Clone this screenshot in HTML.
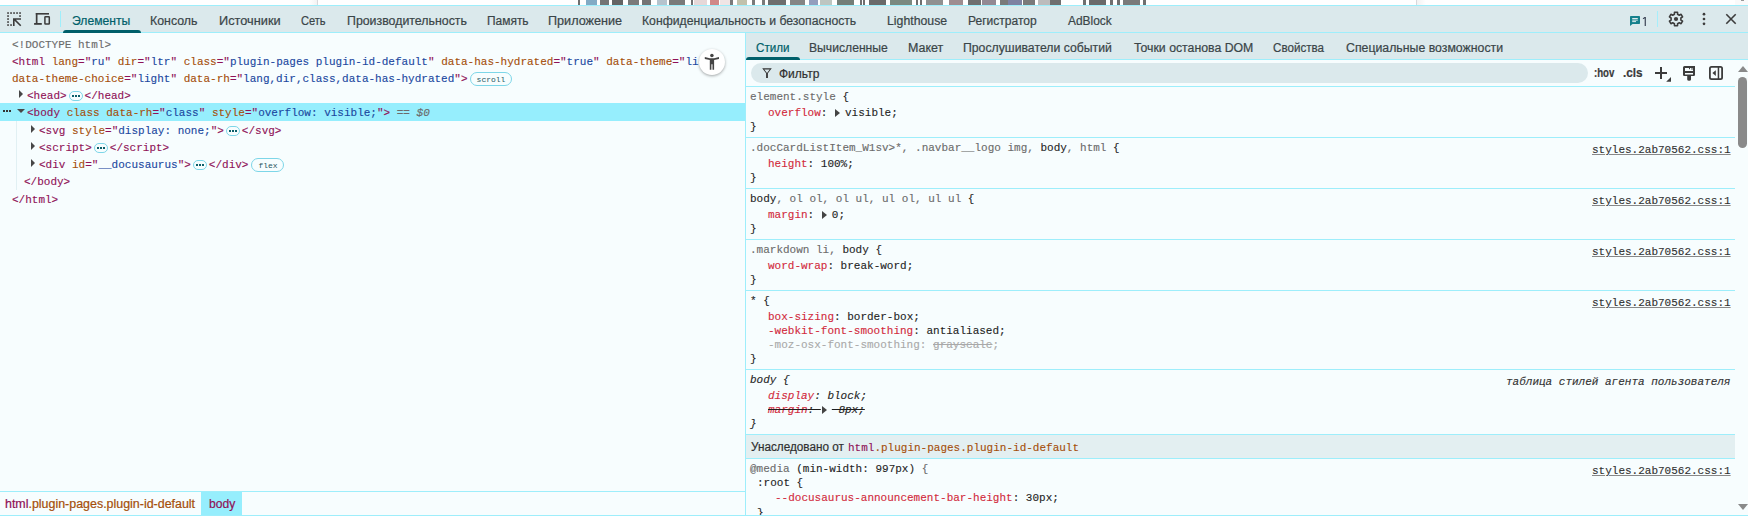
<!DOCTYPE html>
<html><head><meta charset="utf-8"><style>
html,body{margin:0;padding:0;width:1748px;height:516px;overflow:hidden;background:#fff;position:relative}
.r{position:absolute}
svg.r{position:absolute;display:block}
.m{position:absolute;font-family:"Liberation Mono",monospace;font-size:11px;line-height:15px;white-space:pre;color:#1f1f1f;-webkit-text-stroke:0.12px currentColor}
.s{position:absolute;font-family:"Liberation Sans",sans-serif;font-size:12px;line-height:15px;white-space:pre;color:#3a4548;-webkit-text-stroke:0.2px currentColor}
.tg{color:#8f1157} .at{color:#a54e0a} .vl{color:#1a47a0} .gy{color:#6b6b6b}
.pr{color:#d22a3c} .k{color:#1f1f1f}
.dots{display:inline-block;position:relative;width:14px;height:10px;box-sizing:border-box;border:1px solid #7dd6e8;border-radius:5px;margin:0 2px 0 2px;vertical-align:-2px}
.dots:after{content:"";position:absolute;left:2px;top:3px;width:2px;height:2px;background:#0b5f6a;box-shadow:3px 0 #0b5f6a,6px 0 #0b5f6a}
.badge{position:absolute;box-sizing:border-box;border:1px solid #7dd6e8;border-radius:7px;font-family:"Liberation Mono",monospace;font-size:8px;text-align:center;color:#1f5560}
.arr{display:inline-block;width:0;height:0;border-left:5px solid #444;border-top:4px solid transparent;border-bottom:4px solid transparent;margin:0 5px 0 1px;vertical-align:-1px}
.lnk{color:#303030;text-decoration:underline;text-decoration-color:#888}
</style></head><body>
<div class="r" style="left:0px;top:0px;width:1748px;height:5px;background:#ffffff;"></div>
<div class="r" style="left:578px;top:0px;width:2px;height:5px;background:#6f6f6f;"></div>
<div class="r" style="left:586px;top:0px;width:11px;height:5px;background:#82abc5;"></div>
<div class="r" style="left:600px;top:0px;width:9px;height:5px;background:#747474;"></div>
<div class="r" style="left:612px;top:0px;width:11px;height:5px;background:#646464;"></div>
<div class="r" style="left:628px;top:0px;width:11px;height:5px;background:#7a7a7a;"></div>
<div class="r" style="left:642px;top:0px;width:9px;height:5px;background:#747474;"></div>
<div class="r" style="left:657px;top:0px;width:10px;height:5px;background:#b5c3cd;"></div>
<div class="r" style="left:669px;top:0px;width:16px;height:5px;background:#7a7a7a;"></div>
<div class="r" style="left:691px;top:0px;width:2px;height:5px;background:#6f6f6f;"></div>
<div class="r" style="left:694px;top:0px;width:13px;height:5px;background:#e6d8d8;"></div>
<div class="r" style="left:710px;top:0px;width:9px;height:5px;background:#d08888;"></div>
<div class="r" style="left:720px;top:0px;width:10px;height:5px;background:#f0e5e5;"></div>
<div class="r" style="left:730px;top:0px;width:3px;height:5px;background:#7a7a7a;"></div>
<div class="r" style="left:737px;top:0px;width:10px;height:5px;background:#c1c1ac;"></div>
<div class="r" style="left:752px;top:0px;width:3px;height:5px;background:#7a7a7a;"></div>
<div class="r" style="left:762px;top:0px;width:3px;height:5px;background:#7a7a7a;"></div>
<div class="r" style="left:768px;top:0px;width:18px;height:5px;background:#6e6e6e;"></div>
<div class="r" style="left:790px;top:0px;width:15px;height:5px;background:#858585;"></div>
<div class="r" style="left:809px;top:0px;width:9px;height:5px;background:#939ebd;"></div>
<div class="r" style="left:820px;top:0px;width:12px;height:5px;background:#bdc6c1;"></div>
<div class="r" style="left:837px;top:0px;width:17px;height:5px;background:#747e78;"></div>
<div class="r" style="left:860px;top:0px;width:2px;height:5px;background:#6f6f6f;"></div>
<div class="r" style="left:863px;top:0px;width:2px;height:5px;background:#6f6f6f;"></div>
<div class="r" style="left:869px;top:0px;width:17px;height:5px;background:#6a6a6a;"></div>
<div class="r" style="left:890px;top:0px;width:22px;height:5px;background:#7b8980;"></div>
<div class="r" style="left:916px;top:0px;width:2px;height:5px;background:#6f6f6f;"></div>
<div class="r" style="left:920px;top:0px;width:2px;height:5px;background:#6f6f6f;"></div>
<div class="r" style="left:926px;top:0px;width:17px;height:5px;background:#909090;"></div>
<div class="r" style="left:949px;top:0px;width:14px;height:5px;background:#9e8d90;"></div>
<div class="r" style="left:968px;top:0px;width:13px;height:5px;background:#6f6f6f;"></div>
<div class="r" style="left:982px;top:0px;width:14px;height:5px;background:#938993;"></div>
<div class="r" style="left:1000px;top:0px;width:8px;height:5px;background:#7a7a7a;"></div>
<div class="r" style="left:1008px;top:0px;width:14px;height:5px;background:#7e82a2;"></div>
<div class="r" style="left:1023px;top:0px;width:12px;height:5px;background:#7a7a7a;"></div>
<div class="r" style="left:1038px;top:0px;width:12px;height:5px;background:#bcbcbc;"></div>
<div class="r" style="left:1050px;top:0px;width:11px;height:5px;background:#6f6f6f;"></div>
<div class="r" style="left:1083px;top:0px;width:3px;height:5px;background:#6f6f6f;"></div>
<div class="r" style="left:1089px;top:0px;width:17px;height:5px;background:#6a6a6a;"></div>
<div class="r" style="left:1110px;top:0px;width:3px;height:5px;background:#6f6f6f;"></div>
<div class="r" style="left:1117px;top:0px;width:3px;height:5px;background:#6f6f6f;"></div>
<div class="r" style="left:1123px;top:0px;width:17px;height:5px;background:#7a7a7a;"></div>
<div class="r" style="left:1143px;top:0px;width:3px;height:5px;background:#6f6f6f;"></div>
<div class="r" style="left:1416px;top:0px;width:1px;height:5px;background:#d8d8dc;"></div>
<div class="r" style="left:309px;top:0px;width:8px;height:5px;background:#fff;background:linear-gradient(to right,#fff,#f3f3f3)"></div>
<div class="r" style="left:317px;top:0px;width:1px;height:5px;background:#d8d8dc;"></div>
<div class="r" style="left:1735px;top:0px;width:13px;height:5px;background:#fafafa;"></div>
<div class="r" style="left:1741px;top:0px;width:3px;height:1px;background:#999999;"></div>
<div class="r" style="left:1417px;top:0px;width:9px;height:5px;background:#fff;background:linear-gradient(to right,#f3f3f3,#fff)"></div>
<div class="r" style="left:0px;top:5px;width:1748px;height:1px;background:#9eeefb;"></div>
<div class="r" style="left:0px;top:6px;width:1748px;height:26px;background:#dbe9ec;"></div>
<div class="r" style="left:0px;top:32px;width:1748px;height:1px;background:#9eeefb;"></div>
<div class="r" style="left:60px;top:11px;width:1px;height:16px;background:#9eeefb;"></div>
<div class="s" style="left:71.89px;top:14px;transform:scaleX(1.0107);transform-origin:0 0;color:#005f6a">Элементы</div>
<div class="s" style="left:150.47px;top:14px;transform:scaleX(1.0289);transform-origin:0 0;color:#3a4548">Консоль</div>
<div class="s" style="left:218.54px;top:14px;transform:scaleX(1.0632);transform-origin:0 0;color:#3a4548">Источники</div>
<div class="s" style="left:301.1px;top:14px;transform:scaleX(0.9222);transform-origin:0 0;color:#3a4548">Сеть</div>
<div class="s" style="left:346.67px;top:14px;transform:scaleX(1.0296);transform-origin:0 0;color:#3a4548">Производительность</div>
<div class="s" style="left:486.6px;top:14px;transform:scaleX(0.9951);transform-origin:0 0;color:#3a4548">Память</div>
<div class="s" style="left:548.35px;top:14px;transform:scaleX(1.0522);transform-origin:0 0;color:#3a4548">Приложение</div>
<div class="s" style="left:642.48px;top:14px;transform:scaleX(1.0177);transform-origin:0 0;color:#3a4548">Конфиденциальность и безопасность</div>
<div class="s" style="left:886.58px;top:14px;transform:scaleX(1.0241);transform-origin:0 0;color:#3a4548">Lighthouse</div>
<div class="s" style="left:967.6px;top:14px;transform:scaleX(1.0015);transform-origin:0 0;color:#3a4548">Регистратор</div>
<div class="s" style="left:1067.5px;top:14px;transform:scaleX(0.9932);transform-origin:0 0;color:#3a4548">AdBlock</div>
<div class="r" style="left:63px;top:30px;width:78px;height:3px;background:#005f6a;border-radius:3px 3px 0 0"></div>
<svg class="r" style="left:0;top:0" width="60" height="32" viewBox="0 0 60 32"><g fill="#3c3c3c"><rect x="7.2" y="12.2" width="1.7" height="1.7" fill="#4a4a4a"/><rect x="10.2" y="12.2" width="1.7" height="1.7" fill="#4a4a4a"/><rect x="13.2" y="12.2" width="1.7" height="1.7" fill="#4a4a4a"/><rect x="16.2" y="12.2" width="1.7" height="1.7" fill="#4a4a4a"/><rect x="19.2" y="12.2" width="1.7" height="1.7" fill="#4a4a4a"/><rect x="7.2" y="15.2" width="1.7" height="1.7" fill="#4a4a4a"/><rect x="7.2" y="18.2" width="1.7" height="1.7" fill="#4a4a4a"/><rect x="7.2" y="21.2" width="1.7" height="1.7" fill="#4a4a4a"/><rect x="7.2" y="24.2" width="1.7" height="1.7" fill="#4a4a4a"/><rect x="10.2" y="24.2" width="1.7" height="1.7" fill="#4a4a4a"/><rect x="19.2" y="15.2" width="1.7" height="1.7" fill="#4a4a4a"/><path d="M13 18.2 H21 V19.8 H15.9 L21.3 25.2 L20.2 26.3 L14.6 20.7 V26 H13 Z"/><rect x="35.8" y="13" width="13.2" height="1.6"/><rect x="35.8" y="13" width="1.7" height="11"/><rect x="34.1" y="23" width="7.7" height="1.8"/></g><rect x="44.9" y="16.7" width="4.4" height="7.3" rx="0.6" fill="none" stroke="#3c3c3c" stroke-width="1.5"/></svg>
<svg class="r" style="left:1620px;top:6px" width="128" height="26" viewBox="1620 6 128 26"><path d="M1630.8 16 H1639.2 Q1640 16 1640 16.8 V23.2 Q1640 24 1639.2 24 H1632.5 L1630 26 V16.8 Q1630 16 1630.8 16 Z" fill="#14808c"/><rect x="1632.2" y="18" width="5.6" height="1" fill="#dbe9ec"/><rect x="1632.2" y="19.6" width="5.6" height="1" fill="#dbe9ec"/><rect x="1632.2" y="21.1" width="3.8" height="1" fill="#dbe9ec"/><rect x="1657" y="11" width="1" height="16" fill="#a6eefb"/><path d="M1674.49 12.27 L1677.51 12.27 L1677.59 14.26 L1679.31 15.25 L1681.08 14.33 L1682.58 16.94 L1680.90 18.01 L1680.90 19.99 L1682.58 21.06 L1681.08 23.67 L1679.31 22.75 L1677.59 23.74 L1677.51 25.73 L1674.49 25.73 L1674.41 23.74 L1672.69 22.75 L1670.92 23.67 L1669.42 21.06 L1671.10 19.99 L1671.10 18.01 L1669.42 16.94 L1670.92 14.33 L1672.69 15.25 L1674.41 14.26 Z" fill="none" stroke="#3c3c3c" stroke-width="1.6" stroke-linejoin="round"/><circle cx="1676" cy="19" r="2.1" fill="#3c3c3c"/><circle cx="1704" cy="14.2" r="1.35" fill="#3c3c3c"/><circle cx="1704" cy="19" r="1.35" fill="#3c3c3c"/><circle cx="1704" cy="23.8" r="1.35" fill="#3c3c3c"/><path d="M1726.3 14.3 L1735.7 23.7 M1735.7 14.3 L1726.3 23.7" stroke="#3c3c3c" stroke-width="1.6"/></svg>
<svg class="r" style="left:1640px;top:15px" width="8" height="12" viewBox="0 0 8 12"><path d="M4.7 2 L5.8 2 L5.8 11 L4.7 11 L4.7 3.3 L2.9 4.2 L2.9 3.2 Z" fill="#2e3548"/></svg>
<div class="r" style="left:0px;top:33px;width:745px;height:458px;background:#f7fdfe;"></div>
<div class="r" style="left:745px;top:33px;width:1px;height:483px;background:#9eeefb;"></div>
<div class="r" style="left:0px;top:103px;width:745px;height:18px;background:#96eefd;"></div>
<div class="r" style="left:16px;top:121px;width:1px;height:69px;background:#e1f0f3;"></div>
<div class="m" style="left:12px;top:38px;"><span class="gy">&lt;!DOCTYPE html&gt;</span></div>
<div class="m" style="left:12px;top:55px;"><span class="tg">&lt;html</span> <span class="at">lang</span><span class="tg">="</span><span class="vl">ru</span><span class="tg">"</span> <span class="at">dir</span><span class="tg">="</span><span class="vl">ltr</span><span class="tg">"</span> <span class="at">class</span><span class="tg">="</span><span class="vl">plugin-pages plugin-id-default</span><span class="tg">"</span> <span class="at">data-has-hydrated</span><span class="tg">="</span><span class="vl">true</span><span class="tg">"</span> <span class="at">data-theme</span><span class="tg">="</span><span class="vl">light</span><span class="tg">"</span></div>
<div class="m" style="left:12px;top:72px;"><span class="at">data-theme-choice</span><span class="tg">="</span><span class="vl">light</span><span class="tg">"</span> <span class="at">data-rh</span><span class="tg">="</span><span class="vl">lang,dir,class,data-has-hydrated</span><span class="tg">"&gt;</span></div>
<div class="m" style="left:27px;top:89px;"><span class="tg">&lt;head&gt;</span><span class="dots"></span><span class="tg">&lt;/head&gt;</span></div>
<div class="m" style="left:27px;top:106px;"><span class="tg">&lt;body</span> <span class="at">class</span> <span class="at">data-rh</span><span class="tg">="</span><span class="vl">class</span><span class="tg">"</span> <span class="at">style</span><span class="tg">="</span><span class="vl">overflow: visible;</span><span class="tg">"&gt;</span><span class="gy" style="font-style:italic"> == $0</span></div>
<div class="m" style="left:39px;top:124px;"><span class="tg">&lt;svg</span> <span class="at">style</span><span class="tg">="</span><span class="vl">display: none;</span><span class="tg">"&gt;</span><span class="dots"></span><span class="tg">&lt;/svg&gt;</span></div>
<div class="m" style="left:39px;top:141px;"><span class="tg">&lt;script&gt;</span><span class="dots"></span><span class="tg">&lt;/script&gt;</span></div>
<div class="m" style="left:39px;top:158px;"><span class="tg">&lt;div</span> <span class="at">id</span><span class="tg">="</span><span class="vl">__docusaurus</span><span class="tg">"&gt;</span><span class="dots"></span><span class="tg">&lt;/div&gt;</span></div>
<div class="m" style="left:24px;top:175px;"><span class="tg">&lt;/body&gt;</span></div>
<div class="m" style="left:12px;top:193px;"><span class="tg">&lt;/html&gt;</span></div>
<div class="badge" style="left:470px;top:72px;width:42px;height:14px;line-height:13px">scroll</div>
<div class="badge" style="left:251px;top:158px;width:33px;height:14px;line-height:13px;padding-left:1px">flex</div>
<div class="r" style="left:19px;top:90px;width:0;height:0;border-left:4px solid #474747;border-top:4px solid transparent;border-bottom:4px solid transparent"></div>
<div class="r" style="left:17px;top:109px;width:0;height:0;border-top:4px solid #474747;border-left:4px solid transparent;border-right:4px solid transparent"></div>
<div class="r" style="left:31px;top:125px;width:0;height:0;border-left:4px solid #474747;border-top:4px solid transparent;border-bottom:4px solid transparent"></div>
<div class="r" style="left:31px;top:142px;width:0;height:0;border-left:4px solid #474747;border-top:4px solid transparent;border-bottom:4px solid transparent"></div>
<div class="r" style="left:31px;top:159px;width:0;height:0;border-left:4px solid #474747;border-top:4px solid transparent;border-bottom:4px solid transparent"></div>
<div class="r" style="left:3px;top:110px;width:2px;height:2px;background:#333;box-shadow:3px 0 #333,6px 0 #333"></div>
<div class="r" style="left:699px;top:49px;width:26px;height:26px;border-radius:50%;background:#fff;box-shadow:0 1px 3px rgba(0,0,0,.35)"></div>
<svg class="r" style="left:0;top:0" width="745" height="80" viewBox="0 0 745 80"><g fill="#444"><circle cx="711.9" cy="55.6" r="1.75"/><path d="M704.8 57.1 L709.8 58.3 L714.1 58.3 L719 57.1 L719 58.9 L714.1 60 L714.1 69.8 L712.5 69.8 L712.5 64.3 L711.4 64.3 L711.4 69.8 L709.8 69.8 L709.8 60 L704.8 58.9 Z"/></g></svg>
<div class="r" style="left:0px;top:491px;width:745px;height:1px;background:#9eeefb;"></div>
<div class="r" style="left:0px;top:492px;width:745px;height:23px;background:#f7fdfe;"></div>
<div class="r" style="left:201px;top:492px;width:41px;height:23px;background:#96eefd;"></div>
<div class="s" style="left:5.3px;top:497px;transform:scaleX(1.036);transform-origin:0 0;"><span class="tg">html</span><span class="at">.plugin-pages.plugin-id-default</span></div>
<div class="s" style="left:208.8px;top:497px;transform:scaleX(1.0077);transform-origin:0 0;"><span class="tg">body</span></div>
<div class="r" style="left:746px;top:33px;width:1002px;height:26px;background:#dbe9ec;"></div>
<div class="r" style="left:746px;top:59px;width:1002px;height:1px;background:#9eeefb;"></div>
<div class="s" style="left:756.3px;top:41px;transform:scaleX(0.9676);transform-origin:0 0;color:#005f6a">Стили</div>
<div class="s" style="left:809.39px;top:41px;transform:scaleX(1.013);transform-origin:0 0;color:#3a4548">Вычисленные</div>
<div class="s" style="left:908.36px;top:41px;transform:scaleX(1.0394);transform-origin:0 0;color:#3a4548">Макет</div>
<div class="s" style="left:963.28px;top:41px;transform:scaleX(1.0207);transform-origin:0 0;color:#3a4548">Прослушиватели событий</div>
<div class="s" style="left:1133.5px;top:41px;transform:scaleX(1.0233);transform-origin:0 0;color:#3a4548">Точки останова DOM</div>
<div class="s" style="left:1273.4px;top:41px;transform:scaleX(0.9679);transform-origin:0 0;color:#3a4548">Свойства</div>
<div class="s" style="left:1346.3px;top:41px;transform:scaleX(1.0255);transform-origin:0 0;color:#3a4548">Специальные возможности</div>
<div class="r" style="left:746px;top:57px;width:54px;height:3px;background:#005f6a;border-radius:3px 3px 0 0"></div>
<div class="r" style="left:746px;top:60px;width:991px;height:26px;background:#f7fdfe;"></div>
<div class="r" style="left:751px;top:63px;width:837px;height:20px;background:#dbe9ec;border-radius:10px"></div>
<div class="s" style="left:779px;top:67px;color:#303030">Фильтр</div>
<svg class="r" style="left:761px;top:67px" width="12" height="12" viewBox="0 0 12 12"><path d="M1.2 1.2 L10.8 1.2 L6.9 6.2 L6.9 11 L5.1 11 L5.1 6.2 Z M3.3 2.6 L6 6 L8.7 2.6 Z" fill="#333" fill-rule="evenodd"/></svg>
<div class="s" style="left:1593.9px;top:66px;transform:scaleX(0.804);transform-origin:0 0;color:#3a3a3a;font-weight:bold">:hov</div>
<div class="s" style="left:1622.7px;top:66px;transform:scaleX(0.9789);transform-origin:0 0;color:#3a3a3a;font-weight:bold">.cls</div>
<svg class="r" style="left:1650px;top:62px" width="80" height="24" viewBox="1650 62 80 24"><rect x="1655" y="72" width="12" height="2" fill="#3c3c3c"/><rect x="1660" y="67" width="2" height="12" fill="#3c3c3c"/><path d="M1666.2 81.8 L1671 81.8 L1671 77 Z" fill="#3c3c3c"/><path d="M1684.5 66 H1695 V74.8 Q1695 76 1693.8 76 H1691 V79.5 Q1691 80.8 1689.1 80.8 Q1687.2 80.8 1687.2 79.5 V76 H1684.2 Q1683 76 1683 74.8 V67.5 Q1683 66 1684.5 66 Z" fill="#3c3c3c"/><rect x="1685" y="68" width="8" height="3" fill="#f7fdfe"/><rect x="1685" y="73" width="8" height="1.5" fill="#f7fdfe"/><rect x="1689" y="67.6" width="1" height="1.6" fill="#3c3c3c"/><rect x="1691.5" y="67.6" width="1" height="2.2" fill="#3c3c3c"/><rect x="1709.9" y="66.9" width="12.2" height="12.2" rx="1.6" fill="none" stroke="#3c3c3c" stroke-width="1.8"/><rect x="1717.7" y="67" width="1.5" height="12" fill="#3c3c3c"/><path d="M1715.8 70.2 L1715.8 76 L1712.4 73.1 Z" fill="#3c3c3c"/></svg>
<div class="r" style="left:746px;top:86px;width:991px;height:430px;background:#f7fdfe;"></div>
<div class="r" style="left:1737px;top:60px;width:11px;height:456px;background:#f7fdfe;"></div>
<div class="r" style="left:746px;top:86px;width:989px;height:1px;background:#9eeefb;"></div>
<div class="r" style="left:746px;top:137px;width:989px;height:1px;background:#9eeefb;"></div>
<div class="r" style="left:746px;top:188px;width:989px;height:1px;background:#9eeefb;"></div>
<div class="r" style="left:746px;top:239px;width:989px;height:1px;background:#9eeefb;"></div>
<div class="r" style="left:746px;top:290px;width:989px;height:1px;background:#9eeefb;"></div>
<div class="r" style="left:746px;top:369px;width:989px;height:1px;background:#9eeefb;"></div>
<div class="r" style="left:746px;top:434px;width:989px;height:1px;background:#9eeefb;"></div>
<div class="m" style="left:750px;top:90px;"><span class="gy">element.style</span> <span class="k">{</span></div>
<div class="m" style="left:768px;top:106px;"><span class="pr">overflow</span><span class="k">: </span><span class="arr"></span><span class="k">visible;</span></div>
<div class="m" style="left:750px;top:120px;"><span class="k">}</span></div>
<div class="m" style="left:750px;top:141px;"><span class="gy">.docCardListItem_W1sv&gt;*, .navbar__logo img, </span><span class="k">body</span><span class="gy">, html </span><span class="k">{</span></div>
<div class="m" style="left:768px;top:157px;"><span class="pr">height</span><span class="k">: 100%;</span></div>
<div class="m" style="left:750px;top:171px;"><span class="k">}</span></div>
<div class="m" style="left:1592px;top:143px;"><span class="lnk">styles.2ab70562.css:1</span></div>
<div class="m" style="left:750px;top:192px;"><span class="k">body</span><span class="gy">, ol ol, ol ul, ul ol, ul ul </span><span class="k">{</span></div>
<div class="m" style="left:768px;top:208px;"><span class="pr">margin</span><span class="k">: </span><span class="arr"></span><span class="k">0;</span></div>
<div class="m" style="left:750px;top:222px;"><span class="k">}</span></div>
<div class="m" style="left:1592px;top:194px;"><span class="lnk">styles.2ab70562.css:1</span></div>
<div class="m" style="left:750px;top:243px;"><span class="gy">.markdown li, </span><span class="k">body</span> <span class="k">{</span></div>
<div class="m" style="left:768px;top:259px;"><span class="pr">word-wrap</span><span class="k">: break-word;</span></div>
<div class="m" style="left:750px;top:273px;"><span class="k">}</span></div>
<div class="m" style="left:1592px;top:245px;"><span class="lnk">styles.2ab70562.css:1</span></div>
<div class="m" style="left:750px;top:294px;"><span class="k">* {</span></div>
<div class="m" style="left:768px;top:310px;"><span class="pr">box-sizing</span><span class="k">: border-box;</span></div>
<div class="m" style="left:768px;top:324px;"><span class="pr">-webkit-font-smoothing</span><span class="k">: antialiased;</span></div>
<div class="m" style="left:768px;top:338px;"><span style="color:#a9a9a9">-moz-osx-font-smoothing: <s>grayscale</s>;</span></div>
<div class="m" style="left:750px;top:352px;"><span class="k">}</span></div>
<div class="m" style="left:1592px;top:296px;"><span class="lnk">styles.2ab70562.css:1</span></div>
<div class="m" style="left:750px;top:373px;font-style:italic"><span class="k">body {</span></div>
<div class="m" style="left:768px;top:389px;font-style:italic"><span class="pr">display</span><span class="k">: block;</span></div>
<div class="m" style="left:768px;top:403px;font-style:italic"><span style="text-decoration:line-through;color:#1f1f1f"><span class="pr">margin</span>: <span class="arr"></span> 8px;</span></div>
<div class="m" style="left:750px;top:417px;font-style:italic"><span class="k">}</span></div>
<div class="m" style="left:1506px;top:375px;font-style:italic;color:#333">таблица стилей агента пользователя</div>
<div class="r" style="left:746px;top:435px;width:989px;height:23px;background:#e3eff1;"></div>
<div class="r" style="left:746px;top:458px;width:989px;height:1px;background:#9eeefb;"></div>
<div class="s" style="left:750.8px;top:440px;transform:scaleX(0.9789);transform-origin:0 0;color:#303030">Унаследовано от</div>
<div class="m" style="left:848px;top:441px;"><span class="tg">html</span><span class="at">.plugin-pages.plugin-id-default</span></div>
<div class="m" style="left:750px;top:462px;"><span class="gy">@media</span><span class="k"> (min-width: 997px) </span><span class="gy">{</span></div>
<div class="m" style="left:757px;top:476px;"><span class="k">:root {</span></div>
<div class="m" style="left:775px;top:491px;"><span class="pr">--docusaurus-announcement-bar-height</span><span class="k">: 30px;</span></div>
<div class="m" style="left:757px;top:506px;"><span class="k">}</span></div>
<div class="m" style="left:1592px;top:464px;"><span class="lnk">styles.2ab70562.css:1</span></div>
<div class="r" style="left:1738px;top:77px;width:9px;height:71px;border-radius:5px;background:#8a8a8a"></div>
<div class="r" style="left:1738px;top:66px;width:0;height:0;border-bottom:6px solid #8a8a8a;border-left:5px solid transparent;border-right:5px solid transparent"></div>
<div class="r" style="left:1738px;top:504px;width:0;height:0;border-top:6px solid #8a8a8a;border-left:5px solid transparent;border-right:5px solid transparent"></div>
<div class="r" style="left:0px;top:515px;width:1748px;height:1px;background:#9eeefb;"></div>
</body></html>
